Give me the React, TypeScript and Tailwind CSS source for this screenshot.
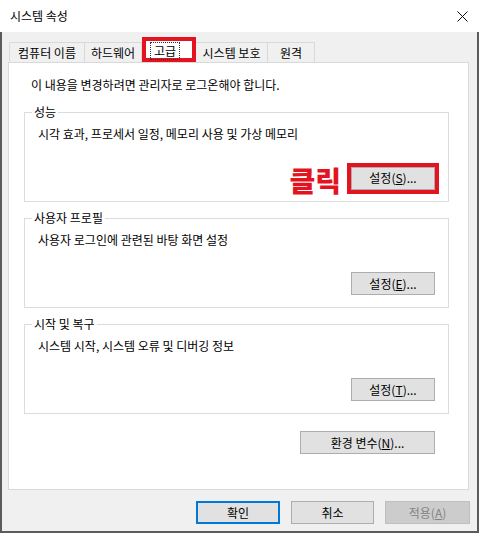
import React from "react"

const font = { fontFamily: '"Noto Sans CJK KR", "Noto Sans", sans-serif' }

function Btn({ children, className = "" }: { children: React.ReactNode; className?: string }) {
    return (
        <div className={`h-[23px] flex items-center justify-center text-[12px] ${className}`}>
            {children}
        </div>
    )
}

const normal = "border border-[#adadad] bg-[#e1e1e1] text-black"

function Group({ title, desc, children }: { title: string; desc: string; children: React.ReactNode }) {
    return (
        <div className="relative h-[90px] border border-[#dcdcdc] pt-[13px] pl-[13px] pr-[13px]">
            <span className="absolute left-[7px] -top-[9px] bg-white px-[2px] leading-4">{title}</span>
            <p className="leading-4">{desc}</p>
            <div className="mt-[24px] flex items-center justify-end">{children}</div>
        </div>
    )
}

export default function App() {
    return (
        <div className="w-[479px] h-[533px] flex flex-col bg-white text-[12px] text-black" style={font}>
            {/* title bar */}
            <div className="h-8 flex items-center justify-between pl-[10px] pr-[11px]">
                <span className="text-[12px] leading-4">시스템 속성</span>
                <svg width="11" height="11" viewBox="0 0 11 11" className="mt-px">
                    <path d="M0.5 0.5 L10.5 10.5 M10.5 0.5 L0.5 10.5" stroke="#111" strokeWidth="1" />
                </svg>
            </div>

            <div className="flex-1 flex flex-col bg-[#f0f0f0] border-l-2 border-r-2 border-b-2 border-[#5b5b5b]">
                {/* tabs */}
                <div className="mt-[5px] ml-[7px] h-[25px] flex items-end">
                    <div className="w-[76px] h-[20px] flex items-center justify-center border border-b-0 border-[#d9d9d9] leading-4">컴퓨터 이름</div>
                    <div className="w-[57px] h-[20px] flex items-center justify-center border border-l-0 border-b-0 border-[#d9d9d9] leading-4">하드웨어</div>
                    <div className="w-[54px] h-[25px] border-4 border-[#e3141f] bg-white flex items-start pt-px pl-[4px]">
                        <span className="leading-4 px-[3px] border border-dotted border-[#333]">고급</span>
                    </div>
                    <div className="w-[72px] h-[20px] flex items-center justify-center border border-l-0 border-b-0 border-[#d9d9d9] leading-4">시스템 보호</div>
                    <div className="w-[47px] h-[20px] flex items-center justify-center border border-l-0 border-b-0 border-[#d9d9d9] leading-4">원격</div>
                </div>

                {/* panel */}
                <div className="ml-[6px] mr-[8px] h-[428px] bg-white border border-[#d9d9d9] pl-[15px] pr-[19px] pt-[14px] flex flex-col">
                    <p className="leading-4 pl-[7px]">이 내용을 변경하려면 관리자로 로그온해야 합니다.</p>
                    <div className="mt-[19px] flex flex-col gap-[16px]">
                        <Group title="성능" desc="시각 효과, 프로세서 일정, 메모리 사용 및 가상 메모리">
                            <span className="mr-[10px] -mb-[4px] text-[28px] leading-7 font-black text-[#e3141f]">클릭</span>
                            <div className="outline-4 outline-[#e3141f]">
                                <Btn className={`w-[84px] ${normal}`}>설정(<u>S</u>)...</Btn>
                            </div>
                        </Group>
                        <Group title="사용자 프로필" desc="사용자 로그인에 관련된 바탕 화면 설정">
                            <Btn className={`w-[84px] ${normal}`}>설정(<u>E</u>)...</Btn>
                        </Group>
                        <Group title="시작 및 복구" desc="시스템 시작, 시스템 오류 및 디버깅 정보">
                            <Btn className={`w-[84px] ${normal}`}>설정(<u>T</u>)...</Btn>
                        </Group>
                    </div>
                    <div className="mt-[17px] flex justify-end pr-[14px]">
                        <Btn className={`w-[135px] ${normal}`}>환경 변수(<u>N</u>)...</Btn>
                    </div>
                </div>

                {/* bottom buttons */}
                <div className="mt-[11px] flex justify-end pr-[7px]">
                    <Btn className="w-[84px] border-2 border-[#0078d7] bg-[#e1e1e1] text-black">확인</Btn>
                    <Btn className={`ml-[11px] w-[83px] ${normal}`}>취소</Btn>
                    <Btn className="ml-[11px] w-[85px] border border-[#bfbfbf] bg-[#cccccc] text-[#838383]">적용(<u>A</u>)</Btn>
                </div>
            </div>
        </div>
    )
}
